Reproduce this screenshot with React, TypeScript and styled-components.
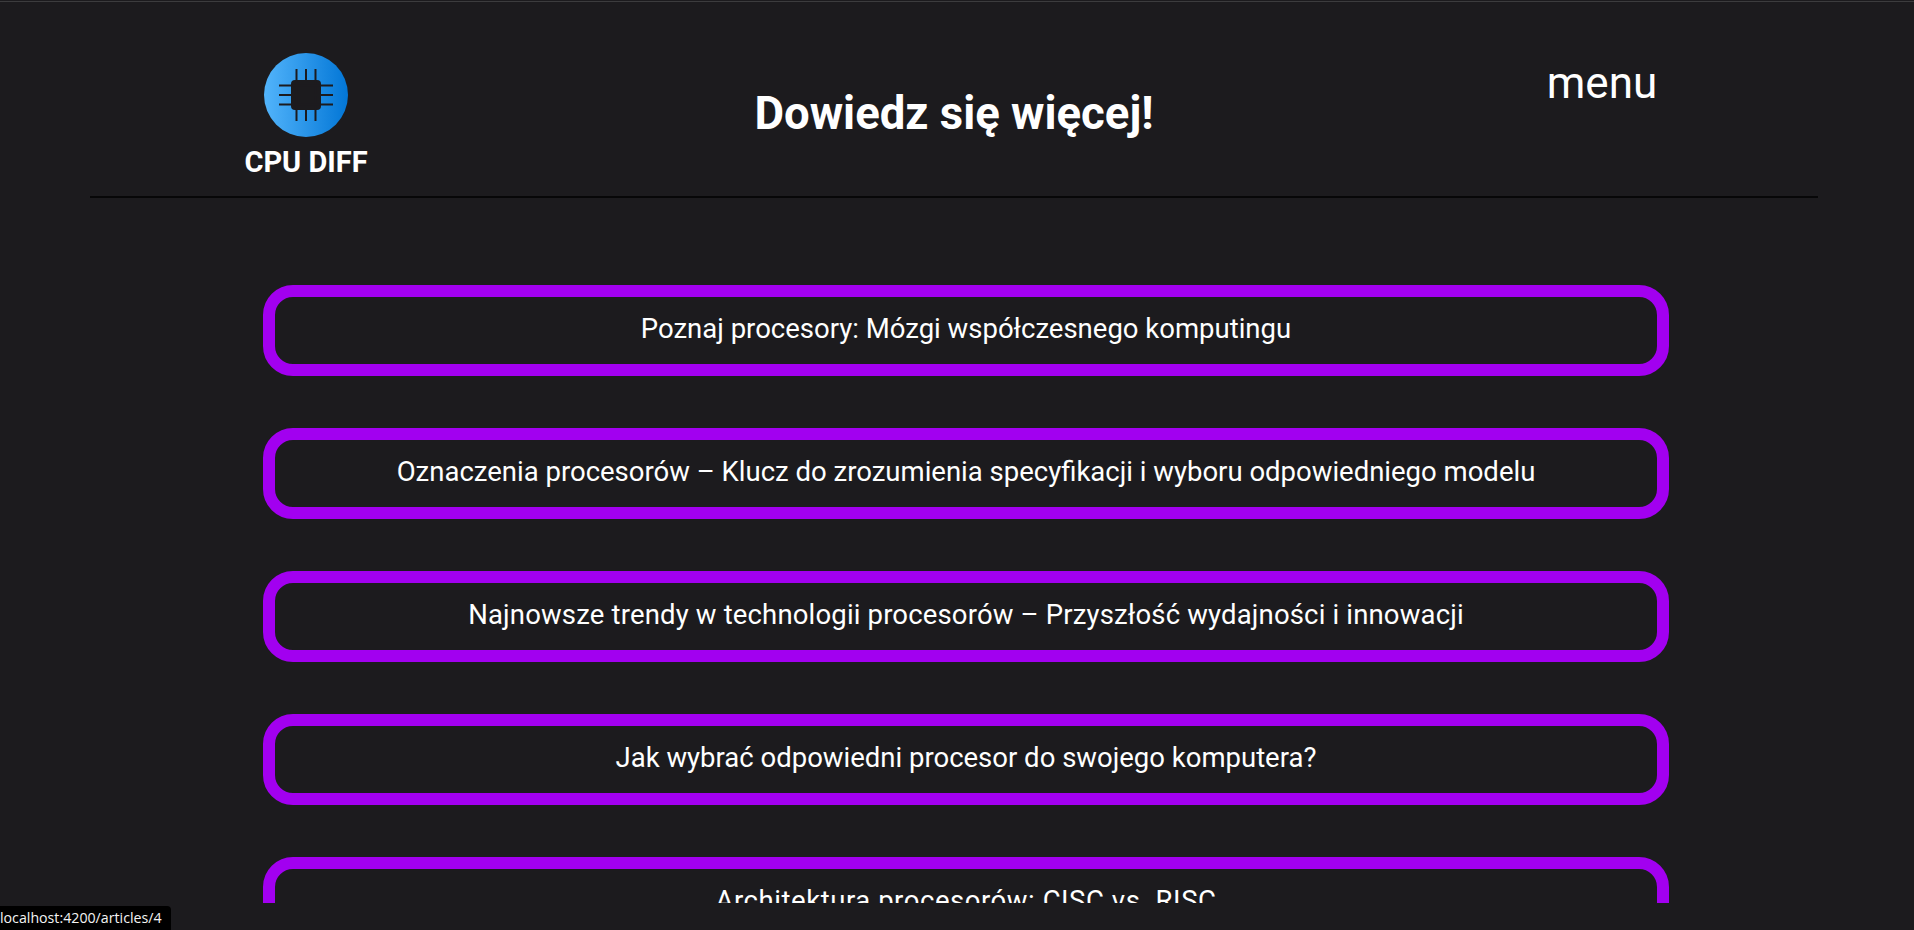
import React from "react";
import styled, { createGlobalStyle } from "styled-components";

const Global = createGlobalStyle`
  html, body { margin: 0; padding: 0; background: #1c1b1e; height: 100%; overflow: hidden; }
  #root { height: 100%; }
  * { box-sizing: border-box; }
`;

const Page = styled.div`
  height: 930px;
  display: flex;
  flex-direction: column;
  background: #1c1b1e;
  color: #fff;
  font-family: Roboto, "Liberation Sans", sans-serif;
`;

const TopEdge = styled.div`
  height: 2px;
  flex: none;
  border-bottom: 1px solid #3c3c3e;
`;

const Viewport = styled.div`
  height: 901px;
  flex: none;
  overflow: hidden;
`;

const Header = styled.header`
  margin: 0 96px 0 90px;
  height: 196px;
  display: grid;
  grid-template-columns: 1fr 2fr 1fr;
  border-bottom: 2px solid #070708;
`;

const Brand = styled.div`
  display: flex;
  flex-direction: column;
  align-items: center;
  padding-top: 51px;
`;

const BrandName = styled.div`
  font-size: 29px;
  font-weight: 700;
  line-height: 32px;
  margin-top: 9px;
`;

const Title = styled.h1`
  margin: 0;
  padding-top: 84px;
  font-size: 45.5px;
  line-height: 56px;
  font-weight: 700;
  text-align: center;
`;

const MenuCell = styled.div`
  display: flex;
  justify-content: center;
  padding-top: 54px;
`;

const MenuLabel = styled.span`
  font-size: 44px;
  line-height: 54px;
  font-weight: 400;
`;

const List = styled.main`
  display: flex;
  flex-direction: column;
  gap: 52px;
  padding: 87px 245px 0 263px;
`;

const Card = styled.a<{ $tracking: number }>`
  flex: none;
  height: 91px;
  display: flex;
  align-items: center;
  justify-content: center;
  border: 12px solid #a200f0;
  border-radius: 30px;
  padding-bottom: 4px;
  font-size: 27.5px;
  letter-spacing: ${(p) => p.$tracking}px;
  color: #fff;
`;

const StatusBar = styled.div`
  position: fixed;
  left: 0;
  bottom: 0;
  width: 171px;
  height: 24px;
  background: #000;
  border-top-right-radius: 4px;
  color: #f4f4f4;
  font-family: "Open Sans", "Liberation Sans", sans-serif;
  font-size: 14.2px;
  line-height: 24px;
  white-space: nowrap;
  overflow: hidden;
`;

const CpuLogo = () => (
  <svg width="84" height="84" viewBox="0 0 84 84">
    <defs>
      <linearGradient id="cpu-grad" x1="0" y1="0" x2="1" y2="0">
        <stop offset="0" stopColor="#52b4fb" />
        <stop offset="1" stopColor="#0276d6" />
      </linearGradient>
    </defs>
    <circle cx="42" cy="42" r="42" fill="url(#cpu-grad)" />
    <rect x="27" y="27" width="30" height="30" rx="4" fill="#1c1b1e" />
    <g stroke="#1c1b1e" strokeWidth="2" fill="none">
      <path d="M32.5 16V68M42 16V68M51.5 16V68" />
      <path d="M15 32.5H69M15 42H69M15 51.5H69" />
    </g>
  </svg>
);

const articles = [
  { title: "Poznaj procesory: Mózgi współczesnego komputingu", tracking: 0 },
  { title: "Oznaczenia procesorów – Klucz do zrozumienia specyfikacji i wyboru odpowiedniego modelu", tracking: 0 },
  { title: "Najnowsze trendy w technologii procesorów – Przyszłość wydajności i innowacji", tracking: 0.16 },
  { title: "Jak wybrać odpowiedni procesor do swojego komputera?", tracking: 0 },
  { title: "Architektura procesorów: CISC vs. RISC", tracking: 0.55 },
];

export default function App() {
  return (
    <Page>
      <Global />
      <TopEdge />
      <Viewport>
        <Header>
          <Brand>
            <CpuLogo />
            <BrandName>CPU DIFF</BrandName>
          </Brand>
          <Title>Dowiedz się więcej!</Title>
          <MenuCell>
            <MenuLabel>menu</MenuLabel>
          </MenuCell>
        </Header>
        <List>
          {articles.map((a) => (
            <Card key={a.title} $tracking={a.tracking}>
              {a.title}
            </Card>
          ))}
        </List>
      </Viewport>
      <StatusBar>localhost:4200/articles/4</StatusBar>
    </Page>
  );
}
